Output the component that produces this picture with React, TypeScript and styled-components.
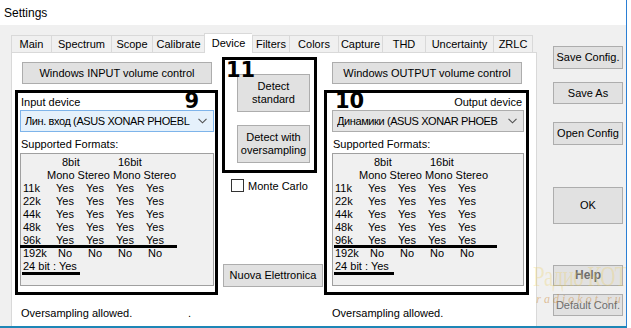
import { createGlobalStyle, styled } from "styled-components";

const Global = createGlobalStyle`
  html, body { margin: 0; padding: 0; background: #fff; }
  body {
    font-family: "Liberation Sans", Arial, sans-serif;
    font-size: 11px;
    color: #000;
  }
`;

const Window = styled.div`
  position: relative;
  width: 626px;
  height: 326px;
  border-right: 1px solid #2b7fd4;
  border-bottom: 2px solid #1e86b6;
  background: #f0f0f0;
  display: flex;
  flex-direction: column;
  overflow: hidden;
`;

const TitleBar = styled.div`
  height: 25px;
  flex: none;
  background: #fff;
  display: flex;
  align-items: center;
  padding-left: 4px;
  font-size: 12px;
`;

const Body = styled.div`
  flex: 1;
  min-height: 0;
  display: flex;
  padding: 8px 0 0 11px;
`;

const TabArea = styled.div`
  width: 526px;
  display: flex;
  flex-direction: column;
`;

const TabStrip = styled.div`
  height: 19px;
  flex: none;
  display: flex;
  align-items: flex-end;
  position: relative;
  z-index: 1;
`;

const Tab = styled.div<{ $w: number; $active?: boolean; $last?: boolean }>`
  box-sizing: border-box;
  width: ${(p) => p.$w}px;
  height: ${(p) => (p.$active ? 20 : 17)}px;
  margin-bottom: ${(p) => (p.$active ? -1 : 0)}px;
  padding-bottom: ${(p) => (p.$active ? 2 : 0)}px;
  border: 1px solid #d9d9d9;
  border-bottom: none;
  border-right: ${(p) => (p.$last ? "1px solid #d9d9d9" : "none")};
  background: ${(p) => (p.$active ? "#fff" : "#f0f0f0")};
  display: flex;
  align-items: center;
  justify-content: center;
  white-space: nowrap;
`;

const Panel = styled.div`
  flex: 1;
  min-height: 0;
  background: #fff;
  border: 1px solid #d9d9d9;
  border-bottom: none;
  display: flex;
  padding-left: 3px;
`;

const Column = styled.div<{ $w: number; $ml?: number }>`
  width: ${(p) => p.$w}px;
  margin-left: ${(p) => p.$ml ?? 0}px;
  display: flex;
  flex-direction: column;
`;

const Button = styled.div<{ $w: number; $h: number }>`
  box-sizing: border-box;
  width: ${(p) => p.$w}px;
  height: ${(p) => p.$h}px;
  flex: none;
  background: #e1e1e1;
  border: 1px solid #adadad;
  display: flex;
  align-items: center;
  justify-content: center;
  text-align: center;
  line-height: 13px;
  white-space: nowrap;
`;

const VolumeButton = styled(Button)<{ $ml: number }>`
  margin: 9px 0 0 ${(p) => p.$ml}px;
`;

const NuovaButton = styled(Button)`
  margin: 72px 0 0 1px;
`;

const Frame = styled.div<{ $pl: number; $pr: number }>`
  box-sizing: border-box;
  margin-top: 6px;
  height: 205px;
  border: 3px solid #000;
  padding: 0 ${(p) => p.$pr}px 0 ${(p) => p.$pl}px;
  display: flex;
  flex-direction: column;
`;

const FrameHead = styled.div`
  height: 17px;
  display: flex;
  align-items: center;
  justify-content: space-between;
  padding: 0 2px 0 1px;
`;

const BigNumber = styled.span<{ $ml?: number; $mr?: number }>`
  font-family: "DejaVu Sans", sans-serif;
  font-weight: bold;
  font-size: 21px;
  line-height: 17px;
  margin-left: ${(p) => p.$ml ?? 0}px;
  margin-right: ${(p) => p.$mr ?? 0}px;
`;

const Select = styled.div<{ $hot?: boolean }>`
  box-sizing: border-box;
  height: 22px;
  border: 1px solid ${(p) => (p.$hot ? "#7eb4ea" : "#adadad")};
  background: ${(p) => (p.$hot ? "#e5f1fb" : "#e5e5e5")};
  display: flex;
  align-items: center;
  padding: 0 6px 0 4px;
  gap: 3px;
`;

const SelectText = styled.span`
  flex: 1;
  overflow: hidden;
  white-space: nowrap;
  letter-spacing: -0.4px;
`;

const Caption = styled.div`
  height: 21px;
  box-sizing: border-box;
  display: flex;
  align-items: flex-end;
  padding: 0 0 2px 1px;
  line-height: 13px;
`;

const Formats = styled.div`
  box-sizing: border-box;
  height: 133px;
  border: 1px solid #a0a0a0;
  background: #f0f0f0;
  padding: 2px 0 0 2px;
  line-height: 13px;
`;

const HeadLine = styled.div<{ $pl: number }>`
  display: flex;
  padding-left: ${(p) => p.$pl}px;
  white-space: nowrap;
`;

const BitLabel = styled.span`
  width: 56px;
`;

const Row = styled.div`
  position: relative;
  display: grid;
  grid-template-columns: 27px repeat(4, 30px);
  justify-items: center;
  & > span:first-child {
    justify-self: start;
  }
`;

const Line = styled.div`
  position: relative;
`;

const Mark = styled.div<{ $l: number; $w: number; $b: number }>`
  position: absolute;
  left: ${(p) => p.$l}px;
  bottom: ${(p) => p.$b}px;
  width: ${(p) => p.$w}px;
  height: 3px;
  background: #000;
`;

const Footer = styled.div<{ $pl: number }>`
  margin-top: 11px;
  line-height: 14px;
  padding: 0 27px 0 ${(p) => p.$pl}px;
  display: flex;
  justify-content: space-between;
`;

const DetectFrame = styled.div`
  position: relative;
  box-sizing: border-box;
  margin-top: 4px;
  width: 95px;
  height: 116px;
  border: 3px solid #000;
  padding: 14px 0 0 12px;
  display: flex;
  flex-direction: column;
  gap: 13px;
`;

const Corner = styled(BigNumber)`
  position: absolute;
  left: 1px;
  top: -1px;
  line-height: 23px;
`;

const CheckRow = styled.label`
  margin-top: 6px;
  padding-left: 9px;
  display: flex;
  align-items: center;
  gap: 4px;
  height: 13px;
`;

const CheckBox = styled.span`
  box-sizing: border-box;
  width: 13px;
  height: 13px;
  border: 1px solid #333;
  background: #fff;
`;

const Side = styled.div`
  width: 70px;
  margin-left: 16px;
  padding-top: 13px;
  display: flex;
  flex-direction: column;
`;

const SideButton = styled(Button)<{ $mt: number; $muted?: boolean; $bold?: boolean }>`
  margin-top: ${(p) => p.$mt}px;
  color: ${(p) => (p.$muted ? "#6d6d6d" : "#000")};
  font-weight: ${(p) => (p.$bold ? "bold" : "normal")};
  font-size: ${(p) => (p.$bold ? 12 : 11)}px;
`;

const Watermark = styled.div`
  position: absolute;
  left: 534px;
  top: 254px;
  width: 92px;
  pointer-events: none;
  display: flex;
  flex-direction: column;
  align-items: center;
`;

const WaterLogo = styled.span`
  font-family: "Liberation Serif", serif;
  font-size: 30px;
  line-height: 44px;
  letter-spacing: -1px;
  color: rgba(236, 205, 90, 0.3);
  transform: scaleX(0.7);
  white-space: nowrap;
`;

const WaterSite = styled.span`
  margin-top: -6px;
  font-family: "Liberation Serif", serif;
  font-style: italic;
  font-size: 12px;
  letter-spacing: 3px;
  color: rgba(205, 140, 60, 0.5);
  white-space: nowrap;
`;

const tabs: [string, number][] = [
  ["Main", 40],
  ["Spectrum", 60],
  ["Scope", 41],
  ["Calibrate", 52],
  ["Device", 48],
  ["Filters", 37],
  ["Colors", 49],
  ["Capture", 44],
  ["THD", 43],
  ["Uncertainty", 68],
  ["ZRLC", 40],
];

const rates = ["11k", "22k", "44k", "48k", "96k"];

function Chevron() {
  return (
    <svg width="9" height="6" viewBox="0 0 9 6">
      <polyline points="0.5,0.8 4.5,4.8 8.5,0.8" fill="none" stroke="#505050" strokeWidth="1.1" />
    </svg>
  );
}

function FormatList({ m96, m24 }: { m96: [number, number]; m24: [number, number] }) {
  return (
    <Formats>
      <HeadLine $pl={39}>
        <BitLabel>8bit</BitLabel>
        <span>16bit</span>
      </HeadLine>
      <HeadLine $pl={24}>Mono Stereo Mono Stereo</HeadLine>
      {rates.map((r) => (
        <Row key={r}>
          <span>{r}</span>
          <span>Yes</span>
          <span>Yes</span>
          <span>Yes</span>
          <span>Yes</span>
          {r === "96k" && <Mark $l={m96[0]} $w={m96[1]} $b={-1} />}
        </Row>
      ))}
      <Row>
        <span>192k</span>
        <span>No</span>
        <span>No</span>
        <span>No</span>
        <span>No</span>
      </Row>
      <Line>
        24 bit : Yes
        <Mark $l={m24[0]} $w={m24[1]} $b={-2} />
      </Line>
    </Formats>
  );
}

export default function App() {
  return (
    <Window>
      <Global />
      <TitleBar>Settings</TitleBar>
      <Body>
        <TabArea>
          <TabStrip>
            {tabs.map(([t, w], i) => (
              <Tab key={t} $w={w} $active={t === "Device"} $last={i === tabs.length - 1}>
                {t}
              </Tab>
            ))}
          </TabStrip>
          <Panel>
            <Column $w={203}>
              <VolumeButton $w={190} $h={22} $ml={7}>
                Windows INPUT volume control
              </VolumeButton>
              <Frame $pl={2} $pr={1}>
                <FrameHead>
                  <span>Input device</span>
                  <BigNumber $mr={13}>9</BigNumber>
                </FrameHead>
                <Select $hot>
                  <SelectText>Лин. вход (ASUS XONAR PHOEBL</SelectText>
                  <Chevron />
                </Select>
                <Caption>Supported Formats:</Caption>
                <FormatList m96={[-3, 157]} m24={[-1, 58]} />
              </Frame>
              <Footer $pl={6}>
                <span>Oversampling allowed.</span>
                <span>.</span>
              </Footer>
            </Column>

            <Column $w={101} $ml={4}>
              <DetectFrame>
                <Corner>11</Corner>
                <Button $w={73} $h={38}>
                  Detect
                  <br />
                  standard
                </Button>
                <Button $w={73} $h={38}>
                  Detect with
                  <br />
                  oversampling
                </Button>
              </DetectFrame>
              <CheckRow>
                <CheckBox />
                Monte Carlo
              </CheckRow>
              <NuovaButton $w={100} $h={23}>
                Nuova Elettronica
              </NuovaButton>
            </Column>

            <Column $w={205} $ml={1}>
              <VolumeButton $w={190} $h={22} $ml={8}>
                Windows OUTPUT volume control
              </VolumeButton>
              <Frame $pl={5} $pr={2}>
                <FrameHead>
                  <BigNumber $ml={2}>10</BigNumber>
                  <span>Output device</span>
                </FrameHead>
                <Select>
                  <SelectText>Динамики (ASUS XONAR PHOEB</SelectText>
                  <Chevron />
                </Select>
                <Caption>Supported Formats:</Caption>
                <FormatList m96={[-1, 163]} m24={[-1, 60]} />
              </Frame>
              <Footer $pl={8}>
                <span>Oversampling allowed.</span>
              </Footer>
            </Column>
          </Panel>
        </TabArea>

        <Side>
          <SideButton $w={70} $h={23} $mt={0}>Save Config.</SideButton>
          <SideButton $w={70} $h={22} $mt={13}>Save As</SideButton>
          <SideButton $w={70} $h={23} $mt={18}>Open Config</SideButton>
          <SideButton $w={70} $h={37} $mt={42}>OK</SideButton>
          <SideButton $w={70} $h={21} $mt={41} $muted $bold>Help</SideButton>
          <SideButton $w={70} $h={22} $mt={8} $muted>Default Conf.</SideButton>
        </Side>
      </Body>
      <Watermark>
        <WaterLogo>Радио КОТ</WaterLogo>
        <WaterSite>radiokot.ru</WaterSite>
      </Watermark>
    </Window>
  );
}
